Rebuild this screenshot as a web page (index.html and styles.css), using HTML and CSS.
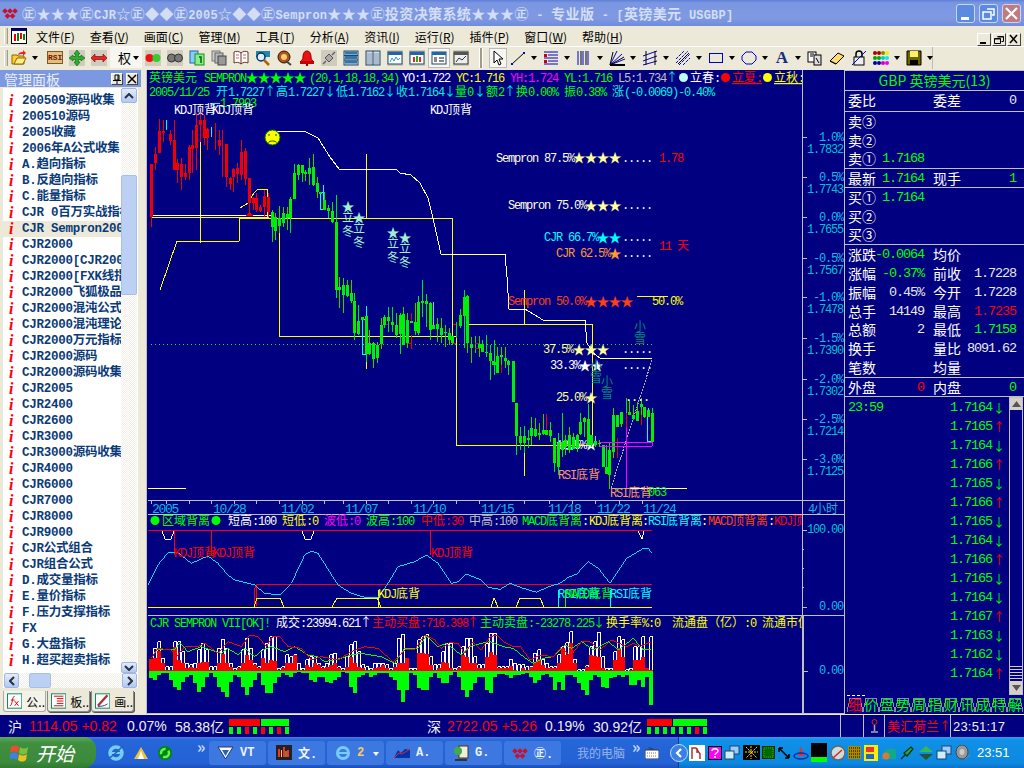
FILE: index.html
```html
<!DOCTYPE html>
<html lang="zh">
<head>
<meta charset="utf-8">
<title>英镑美元 USGBP</title>
<link rel="stylesheet" href="styles.css">
</head>
<body>
<div class="app">

<header class="titlebar">
  <svg class="logo" width="16" height="14" viewBox="0 0 16 14"><g class="logo-d"><rect x="1" y="3" width="4" height="4" transform="rotate(45 3 5)"/><rect x="6" y="3" width="4" height="4" transform="rotate(45 8 5)"/><rect x="11" y="3" width="4" height="4" transform="rotate(45 13 5)"/><rect x="3.500" y="8" width="4" height="4" transform="rotate(45 5.500 10)"/><rect x="8.500" y="8" width="4" height="4" transform="rotate(45 10.500 10)"/></g></svg>
  <div class="title-text">㊣★★★㊣<span class="lat">CJR</span>☆㊣◆◆㊣<span class="lat">2005</span>☆◆◆㊣<span class="lat">Sempron</span>★★★㊣投资决策系统★★★㊣<span class="lat"> - </span>专业版<span class="lat"> - [</span>英镑美元<span class="lat"> USGBP]</span></div>
  <div class="winbtns">
    <div class="wb"><svg width="19" height="19" viewBox="0 0 19 19"><rect x="5" y="13" width="8" height="3" fill="#fff"/></svg></div>
    <div class="wb"><svg width="19" height="19" viewBox="0 0 19 19"><path d="M8 5h7v6h-2M4 8h8v7H4z" fill="none" stroke="#fff" stroke-width="1.500"/></svg></div>
    <div class="wb wb-close"><svg width="19" height="19" viewBox="0 0 19 19"><path d="M4 4l11 11M15 4L4 15" stroke="#fff" stroke-width="2.200"/></svg></div>
  </div>
</header>

<nav class="menubar">
  <div class="grip"></div>
  <svg class="appicon" width="16" height="16" viewBox="0 0 16 16"><rect x=".5" y=".5" width="15" height="15" fill="#fff" stroke="#000"/><path d="M1 2h14" stroke="#00a" stroke-width="2"/><path d="M4 6v7M10 5v6" stroke="#e00" stroke-width="2"/><path d="M7 5v8M13 6v6" stroke="#080" stroke-width="2"/></svg>
  <div class="menus">
    <span>文件(<u>F</u>)</span><span>查看(<u>V</u>)</span><span>画面(<u>C</u>)</span><span>管理(<u>M</u>)</span><span>工具(<u>T</u>)</span><span>分析(<u>A</u>)</span><span>资讯(<u>I</u>)</span><span>运行(<u>R</u>)</span><span>插件(<u>P</u>)</span><span>窗口(<u>W</u>)</span><span>帮助(<u>H</u>)</span>
  </div>
  <div class="mdibtns">
    <div class="mb"><svg width="12" height="11" viewBox="0 0 12 11"><path d="M2 8h6v2H2z"/></svg></div>
    <div class="mb"><svg width="12" height="11" viewBox="0 0 12 11"><path d="M4.500 2.500h6v5h-2M1.500 4.500h6v5h-6zM1.500 5h6M4.500 3h6" fill="none" stroke="#000"/></svg></div>
    <div class="mb"><svg width="12" height="11" viewBox="0 0 12 11"><path d="M2 1l7 8M9 1L2 9" stroke="#000" stroke-width="1.500"/></svg></div>
  </div>
</nav>

<div class="toolbar">
  <div class="grip"></div>
  <div class="tools">
    <div class="tb"><svg width="16" height="16" viewBox="0 0 16 16"><path d="M1 5h5l1 1h6v8H1z" fill="#fc3" stroke="#860"/><path d="M3 14l3-6h9l-3 6z" fill="#fe8" stroke="#860"/><path d="M7 5c1-3 3-3 5-3V0l3 3-3 3V4c-2 0-3 0-5 1z" fill="#e22"/></svg></div>
    <div class="dd"></div>
    <div class="tb gapl"><span class="rsi">RSI</span></div>
    <div class="tb ic"><svg width="16" height="16" viewBox="0 0 16 16"><path d="M8 0l3 4H9.500v2.500H12V5l4 3-4 3V9.500H9.500V12H11l-3 4-3-4h1.500V9.500H4V11L0 8l4-3v1.500h2.500V4H5z" fill="#3a3" stroke="#060" stroke-width=".6"/></svg></div>
    <div class="tb ic"><svg width="16" height="16" viewBox="0 0 16 16"><path d="M0 8l4-4v2.500h8V4l4 4-4 4V9.500H4V12z" fill="#e22" stroke="#700" stroke-width=".6"/></svg></div>
    <div class="tb quan"><span>权</span><i class="caret"></i></div>
    <div class="tb ic"><svg width="16" height="16" viewBox="0 0 16 16"><circle cx="4.500" cy="8" r="4" fill="#e11"/><circle cx="11.500" cy="8" r="4" fill="#3c3"/></svg></div>
    <div class="tb ic"><svg width="16" height="16" viewBox="0 0 16 16"><circle cx="4.500" cy="8" r="4" fill="#777" stroke="#333"/><circle cx="11.500" cy="8" r="4" fill="#777" stroke="#333"/></svg></div>
    <div class="tb"><svg width="16" height="16" viewBox="0 0 16 16"><rect x="1" y="1" width="8" height="12" fill="#8cf" stroke="#26a"/><rect x="6" y="4" width="9" height="11" fill="#8e8" stroke="#282"/><path d="M10 7h2v6" fill="none" stroke="#060" stroke-width="1.500"/></svg></div>
    <div class="tb"><svg width="16" height="16" viewBox="0 0 16 16"><rect x="1" y="1" width="8" height="10" fill="#ccc" stroke="#777"/><rect x="4" y="3" width="8" height="10" fill="#bbb" stroke="#666"/><rect x="7" y="6" width="8" height="9" fill="#999" stroke="#444"/></svg></div>
    <div class="tb"><svg width="16" height="16" viewBox="0 0 16 16"><path d="M8 3C6 1 3 1 1 2v11c2-1 5-1 7 1 2-2 5-2 7-1V2c-2-1-5-1-7 1z" fill="#fff" stroke="#632"/><path d="M8 3v11" stroke="#632"/><path d="M3 5h3M3 8h3M10 5h3M10 8h3" stroke="#c66"/></svg></div>
    <div class="tb"><svg width="16" height="16" viewBox="0 0 16 16"><rect x="1" y="1" width="14" height="6" fill="#28a"/><circle cx="6" cy="7" r="4" fill="#def" stroke="#036" stroke-width="1.500"/><path d="M9 10l5 5" stroke="#a60" stroke-width="2.500"/></svg></div>
    <div class="tb"><svg width="16" height="16" viewBox="0 0 16 16"><circle cx="7" cy="7" r="6" fill="#a52" stroke="#310"/><circle cx="7" cy="7" r="3" fill="#fc6"/><path d="M9 11l5 4" stroke="#444" stroke-width="2"/></svg></div>
    <div class="tb"><svg width="16" height="16" viewBox="0 0 16 16"><path d="M8 1c-3 0-4 3-4 6 0 2-1 3-3 5h14c-2-2-3-3-3-5 0-3-1-6-4-6z" fill="#e11" stroke="#800"/><rect x="1" y="12" width="14" height="2" fill="#c00"/><circle cx="8" cy="15" r="1.200" fill="#800"/></svg></div>
    <div class="tb ic"><svg width="16" height="16" viewBox="0 0 16 16"><path d="M2 14l3-3M11 5l3-3" stroke="#666" stroke-width="1.500"/><path d="M4 8l4-4 4 4-4 4z" fill="#aaa" stroke="#555"/></svg></div>
    <div class="tb"><svg width="16" height="16" viewBox="0 0 16 16"><rect x="1" y="1" width="14" height="14" fill="#cde" stroke="#246"/><path d="M2 3h12M2 7.500h12M2 12h12" stroke="#37a" stroke-width="3"/><path d="M1 5.500h14M1 10h14" stroke="#246"/></svg></div>
    <div class="tb"><svg width="16" height="16" viewBox="0 0 16 16"><rect x="1" y="1" width="14" height="14" fill="#cde" stroke="#246"/><rect x="2" y="3" width="5" height="11" fill="#abc"/><rect x="9" y="3" width="5" height="11" fill="#abc"/><path d="M8 1v14" stroke="#246"/></svg></div>
    <div class="tb ic"><svg width="16" height="16" viewBox="0 0 16 16"><rect x="1" y="2" width="14" height="12" fill="#fff" stroke="#246"/><rect x="1" y="2" width="14" height="3" fill="#26a"/><path d="M3 12l2-4 2 3 2-4 2 3 2-2" fill="none" stroke="#39c"/></svg></div>
    <div class="tb ic"><svg width="16" height="16" viewBox="0 0 16 16"><rect x="1" y="2" width="14" height="12" fill="#fff" stroke="#246"/><rect x="1" y="2" width="14" height="3" fill="#26a"/><path d="M5 7v5M11 7v5" stroke="#e22" stroke-width="2"/><path d="M8 6v6" stroke="#2a2" stroke-width="2"/></svg></div>
    <div class="tb pressed"><svg width="16" height="16" viewBox="0 0 16 16"><rect x="1" y="2" width="14" height="12" fill="#fff" stroke="#246"/><rect x="1" y="2" width="14" height="3" fill="#26a"/><rect x="3" y="7" width="3" height="5" fill="#888"/><rect x="8" y="7" width="5" height="2" fill="#888"/><rect x="8" y="10" width="5" height="2" fill="#888"/></svg></div>
    <div class="tb ic"><svg width="16" height="16" viewBox="0 0 16 16"><rect x="1" y="2" width="14" height="12" fill="#eee" stroke="#333"/><rect x="1" y="2" width="14" height="3" fill="#555"/><path d="M3 12l3-4 3 2 4-4" fill="none" stroke="#333"/></svg></div>
    <div class="tsep"></div>
    <div class="tb cursor"><svg width="14" height="16" viewBox="0 0 14 16"><path d="M3 1v12l3-3 2 5 2-1-2-5h4z" fill="#fff" stroke="#000"/></svg></div>
    <div class="tb"><svg width="16" height="16" viewBox="0 0 16 16"><path d="M2 14L14 3" stroke="#000"/><path d="M13 2h2v2h-2zM1 13h2v2H1z" fill="#00c"/></svg></div><div class="dd"></div>
    <div class="tb"><svg width="16" height="16" viewBox="0 0 16 16"><path d="M1 2h14M5 5h10M1 8h14M5 11h10M1 14h14" stroke="#00c"/><path d="M1 4h3v3H1zM1 10h3v3H1z" fill="#c00"/></svg></div><div class="dd"></div>
    <div class="tb"><svg width="16" height="16" viewBox="0 0 16 16"><path d="M2 1v14M7 1v14M12 1v14" stroke="#00c" stroke-width="1"/><path d="M5 1v14M10 1v14" stroke="#000"/></svg></div><div class="dd"></div>
    <div class="tb"><svg width="16" height="16" viewBox="0 0 16 16"><path d="M1 15L8 1M1 15L13 4M1 15L16 9" stroke="#00c"/><path d="M1 15L4 2M1 15L15 7" stroke="#000"/><path d="M1 15h15" stroke="#000" stroke-width="2"/></svg></div><div class="dd"></div>
    <div class="tb"><svg width="16" height="16" viewBox="0 0 16 16"><path d="M1 6l14-5M1 11l14-5M1 15l14-4" stroke="#00c"/><path d="M4 1v14M13 1v14" stroke="#000"/></svg></div><div class="dd"></div>
    <div class="tb"><svg width="16" height="16" viewBox="0 0 16 16"><path d="M1 9l8-8M1 13l12-12M4 15L15 4M8 15l7-7" stroke="#00c" stroke-dasharray="3 1"/><path d="M3 14L14 3" stroke="#000"/></svg></div><div class="dd"></div>
    <div class="tb"><svg width="16" height="16" viewBox="0 0 16 16"><rect x="1.500" y="3.500" width="13" height="9" fill="none" stroke="#00c" stroke-width="1"/></svg></div><div class="dd"></div>
    <div class="tb"><svg width="16" height="16" viewBox="0 0 16 16"><path d="M5 2h6l4 4v4l-4 4H5l-4-4V6z" fill="none" stroke="#00c"/></svg></div><div class="dd"></div>
    <div class="tb serifA">A</div><div class="dd"></div>
    <div class="tb"><svg width="16" height="16" viewBox="0 0 16 16"><rect x="1" y="2" width="8" height="10" fill="#fff" stroke="#000"/><rect x="7" y="5" width="7" height="10" fill="#ddd" stroke="#000"/><path d="M3 4h4M3 6h3M9 8l3 5" stroke="#000"/></svg></div>
    <div class="tb"><svg width="16" height="16" viewBox="0 0 16 16"><path d="M1 11l8-8 6 3-8 8z" fill="#fd6" stroke="#000"/><path d="M1 11l6 3" stroke="#000"/></svg></div>
    <div class="tb"><svg width="16" height="16" viewBox="0 0 16 16"><rect x="3" y="7" width="10" height="8" fill="#eee" stroke="#000"/><path d="M5 7V4c0-4 6-4 6 0v3" fill="none" stroke="#000" stroke-width="1.500"/><path d="M1 15L15 1" stroke="#00c"/></svg></div>
    <div class="tb"><svg width="16" height="14" viewBox="0 0 16 14"><g stroke-width="0"><circle cx="2" cy="2" r="2" fill="#a00"/><circle cx="6" cy="2" r="2" fill="#a00"/><circle cx="10" cy="2" r="2" fill="#880"/><circle cx="14" cy="2" r="2" fill="#ee0"/><circle cx="2" cy="7" r="2" fill="#0a0"/><circle cx="6" cy="7" r="2" fill="#0a0"/><circle cx="10" cy="7" r="2" fill="#0cc"/><circle cx="14" cy="7" r="2" fill="#0ee"/><circle cx="2" cy="12" r="2" fill="#00a"/><circle cx="6" cy="12" r="2" fill="#00a"/><circle cx="10" cy="12" r="2" fill="#c0c"/><circle cx="14" cy="12" r="2" fill="#e0e"/></g></svg></div><div class="dd"></div>
    <div class="tb"><svg width="16" height="16" viewBox="0 0 16 16"><path d="M1 1h14v14H1z" fill="#660" stroke="#000"/><rect x="4" y="1" width="8" height="6" fill="#fe6"/><rect x="4" y="10" width="8" height="5" fill="#000"/></svg></div><div class="dd"></div>
  </div>
</div>

<main class="main">
  <aside class="side">
    <div class="side-head">
      <span>管理面板</span>
      <div class="side-btns">
        <div class="mb sb"><svg width="10" height="10" viewBox="0 0 10 10"><path d="M3 1h4v5H3zM1 6.500h8M5 7v3M6 1v5" fill="none" stroke="#000"/></svg></div>
        <div class="mb sb"><svg width="10" height="10" viewBox="0 0 10 10"><path d="M1 1l8 8M9 1L1 9" stroke="#000" stroke-width="1.500"/></svg></div>
      </div>
    </div>
    <div class="listbox">
      <div class="list-wrap">
        <ul class="list">
          <li><i>i</i>200509源码收集</li>
          <li><i>i</i>200510源码</li>
          <li><i>i</i>2005收藏</li>
          <li><i>i</i>2006年A公式收集</li>
          <li><i>i</i>A.趋向指标</li>
          <li><i>i</i>B.反趋向指标</li>
          <li><i>i</i>C.能量指标</li>
          <li><i>i</i>CJR 0百万实战指标</li>
          <li class="sel"><i>i</i>CJR Sempron2000</li>
          <li><i>i</i>CJR2000</li>
          <li><i>i</i>CJR2000[CJR2000</li>
          <li><i>i</i>CJR2000[FXK线指标</li>
          <li><i>i</i>CJR2000飞狐极品</li>
          <li><i>i</i>CJR2000混沌公式</li>
          <li><i>i</i>CJR2000混沌理论</li>
          <li><i>i</i>CJR2000万元指标</li>
          <li><i>i</i>CJR2000源码</li>
          <li><i>i</i>CJR2000源码收集</li>
          <li><i>i</i>CJR2005</li>
          <li><i>i</i>CJR2400</li>
          <li><i>i</i>CJR2600</li>
          <li><i>i</i>CJR3000</li>
          <li><i>i</i>CJR3000源码收集</li>
          <li><i>i</i>CJR4000</li>
          <li><i>i</i>CJR6000</li>
          <li><i>i</i>CJR7000</li>
          <li><i>i</i>CJR8000</li>
          <li><i>i</i>CJR9000</li>
          <li><i>i</i>CJR公式组合</li>
          <li><i>i</i>CJR组合公式</li>
          <li><i>i</i>D.成交量指标</li>
          <li><i>i</i>E.量价指标</li>
          <li><i>i</i>F.压力支撑指标</li>
          <li><i>i</i>FX</li>
          <li><i>i</i>G.大盘指标</li>
          <li><i>i</i>H.超买超卖指标</li>
        </ul>
        <div class="vscroll">
          <div class="sbtn"><svg width="10" height="6" viewBox="0 0 10 6"><path d="M1 5l4-4 4 4" fill="none" stroke="#234" stroke-width="2"/></svg></div>
          <div class="vtrack"><div class="vthumb"></div></div>
          <div class="sbtn sbtn-s"><svg width="10" height="6" viewBox="0 0 10 6"><path d="M1 1l4 4 4-4" fill="none" stroke="#234" stroke-width="2"/></svg></div>
        </div>
      </div>
      <div class="hscroll">
        <div class="sbtn hb"><svg width="6" height="10" viewBox="0 0 6 10"><path d="M5 1L1 5l4 4" fill="none" stroke="#234" stroke-width="2"/></svg></div>
        <div class="htrack"><div class="hthumb"></div></div>
        <div class="sbtn hb"><svg width="6" height="10" viewBox="0 0 6 10"><path d="M1 1l4 4-4 4" fill="none" stroke="#234" stroke-width="2"/></svg></div>
      </div>
    </div>
    <div class="sidetabs">
      <div class="stab active"><svg width="16" height="16" viewBox="0 0 16 16"><rect x=".5" y=".5" width="15" height="15" fill="#fff" stroke="#086"/><path d="M3 13c3 0 2-10 5-10M4 7h4M8 8l4 5M12 8l-4 5" fill="none" stroke="#d00"/></svg><span>公..</span></div>
      <div class="stab"><svg width="16" height="16" viewBox="0 0 16 16"><rect x=".5" y=".5" width="15" height="15" fill="#fff" stroke="#086"/><path d="M3 3h10M6 5.500h7M6 8h7M6 10.500h7M3 13h10" stroke="#d00"/></svg><span>板..</span></div>
      <div class="stab"><svg width="16" height="16" viewBox="0 0 16 16"><rect x=".5" y=".5" width="15" height="15" fill="#fff" stroke="#086"/><path d="M3 13L13 2" stroke="#a33" stroke-width="2.500"/><path d="M3 14c3-1 6 0 10-3" fill="none" stroke="#33a"/></svg><span>画..</span></div>
    </div>
  </aside>

  <div class="chart">
    <svg class="chart-svg" width="698" height="644" viewBox="146 70 698 644">
      <defs><clipPath id="plot"><rect x="148" y="70" width="654" height="644"/></clipPath></defs>
      <rect class="navy" x="146" y="70" width="698" height="644"/>
      <path class="ln-gy" d="M146.500 70V714M802.500 70V714M803.500 616V714M148 500.500H844M148 514.500H844M148 615.500H844M146 713.500H844"/>

      <g clip-path="url(#plot)">
        <!-- main chart overlays -->
        <path class="ln-dot" d="M151 344.500H653"/>
        <path class="ln-y" d="M160 290L177 241H239L240 218H452V336M200 140V243M366 154V218M279.500 218V336H456M456.500 336V445H592V324H468M366.500 360V369M524.500 290V324M524.500 443V476M151 217H268V215M240 208L248 203L254 193L258 189H267V217"/>
        <path class="ln-w" d="M151 215H271M268 131H304L318 138L330 157L339 169H396L400 173L411 175L420 183L428 198L433 218L441 254H505L507 277L509 309H525L543 320H585L587 343L593 353L600 358H652M148 488H186M618 488H687"/>
        <path class="ln-gy2" d="M611 488L652 360"/>
        <path class="ln-y" d="M637 296H668"/>

        <text class="t w" x="556" y="449"><tspan class="m">12.5%</tspan></text>
        <text class="s w" x="591" y="449">★</text>

        <!-- red candles -->
        <g transform="translate(148 70) scale(.33333)">
          <path class="wick-r" d="M10 282V472M22 232V300M34 148V250M46 150V215M67 180V225M80 150V300M88 268V340M100 265V360M112 282V330M125 225V330M133 180V310M145 130V300M158 120V215M170 135V225M178 175V240M202 160V240M214 180V255M224 180V320M235 222V350M248 320V360M258 295V365M270 280V340M281 210V330M292 235V345M304 325V430M316 380V420M325 370V425M337 405V425M349 360V440M361 370V440"/>
          <path class="body-r" d="M10 282V440M22 252V280M34 184V250M46 184V190M67 192V212M80 210V300M88 280V300M100 282V322M112 310V322M124 230V310M133 225V238M145 165V235M158 150V165M170 150V205M178 178V203M214 210V227M235 222V320M248 324V342M258 297V322M270 293V312M281 245V315M292 243V327M304 325V400M316 385V398M325 385V420M337 412V423M349 378V410M361 380V425"/>
          <path class="wick-c" d="M55 150V180M190 172V200M528 345V418M517 368V418M517 368H528M517 418H528"/>
          <path class="tri" d="M292 438L304 425L317 438Z"/>
          <!-- green candles, first run -->
          <path class="wick-g" d="M373 420V515M382 430V510M394 408V490M406 410V470M418 410V480M428 380V490M439 282V388M451 282V330M463 285V335M472 300V332M484 265V345M496 252V348M508 320V385M530 365V420M541 405V445M553 395V460M565 375V660M574 620V660M586 625V660M598 630V660M610 630V660M823 630V660"/>
          <path class="body-g" d="M373 425V472M382 440V483M394 445V468M406 430V460M418 432V445M428 388V445M439 310V386M451 285V314M463 285V310M472 307V312M484 295V312M496 292V345M508 340V367M518 367V372M530 390V420M541 415V423M553 423V455M565 455V660M574 650V660M586 645V660M598 645V660"/>
        </g>
        <g transform="translate(148 290) scale(.33333)">
          <path class="wick-g" d="M565 0V25M574 0V55M586 0V70M598 0V20M610 0V40M619 10V150M631 45V135M655 48V215M664 120V195M676 155V235M688 155V220M700 85V178M709 75V115M721 50V125M733 50V125M745 68V145M757 68V192M766 50V165M778 68V175M802 40V135M811 18V135M823 0V80M835 12V110M847 35V150M868 85V155M880 85V158M892 105V172M904 115V165M913 140V165M925 95V145M937 57V115M949 0V175M958 15V190M970 140V218M982 138V190M994 138V202M1003 150V185M1015 135V200M1027 165V270M1039 150V255M1048 170V245"/>
          <path class="wick-c" d="M643 90V193H655M643 90H655M655 48V80M856 35V105"/>
          <path class="wick-r" d="M790 70V100M790 135V178M780 160H790M712 105H721M915 103H925M915 160H925M982 162H994M980 175H994"/>
          <path class="wick-y" d="M655 215V236"/>
          <path class="body-g" d="M586 0V15M598 0V18M610 8V33M619 33V130M631 93V133M643 80V90M655 78V192M664 160V192M676 160V207M688 165V205M700 105V162M709 80V106M721 82V94M733 95V105M745 105V135M757 75V132M766 72V165M778 90V160M790 93V100M802 95V123M811 37V130M823 33V40M835 33V42M847 40V120M856 105V117M868 102V117M880 115V135M892 125V128M904 130V150M913 138V160M937 75V108M949 22V78M958 18V158M970 162V175M994 162V175M1003 162V187M1015 185V188M1027 188V213M1039 215V225M1048 197V250"/>
        </g>
        <g transform="translate(490 290) scale(.33333)">
          <path class="wick-g" d="M34 170V250M46 170V235M57 210V255M70 212V335M80 340V495M92 410V480M104 408V490M116 420V475M124 380V465M136 385V440M148 400V450M160 372V435M182 395V455M194 445V545M206 430V555M218 370V500M228 435V495M240 410V490M250 430V478M262 432V485M272 370V435M284 380V440M296 342V465M304 435V470M316 437V472M328 450V470M340 465V530M350 465V553M360 455V598M372 355V505M396 365V410M410 325V415M418 330V372M430 345V390M442 335V392M454 325V375M464 352V385M487 355V458"/>
          <path class="wick-r" d="M170 372V420M384 445V505M410 368V415M454 375V405M35 225V250"/>
          <path class="wick-c" d="M474 380V455H486M476 355V380M228 478H250M316 437V452"/>
          <path class="body-g" d="M12 213V225M22 215V222M34 195V200M46 205V212M57 212V225M70 213V335M80 340V437M92 438V458M104 438V458M116 445V450M124 415V437M136 417V437M148 430V434M160 420V432M170 420V435M182 420V437M194 445V520M206 460V530M218 455V480M228 450V470M240 435V480M250 440V478M262 435V475M272 395V432M284 383V397M296 386V465M304 435V465M316 453V465M328 458V462M340 465V530M350 530V553M360 480V555M372 375V487M384 375V412M396 367V402M418 367V375M430 375V387M442 362V392M454 343V352M464 352V380M476 360V382M487 370V455"/>
          <path class="ln-mg3" d="M330 469H487V457H330M410 415V595"/>
          <path class="ln-g3" d="M362 597H420"/>
        </g>

        <!-- header lines -->
        <text class="t g" x="149" y="82">英镑美元</text>
        <text class="t g" x="204" y="82"><tspan class="m">SEMPRON</tspan></text>
        <text class="s g" x="252" y="82">★</text><text class="s g" x="264" y="82">★</text><text class="s g" x="276" y="82">★</text><text class="s g" x="288" y="82">★</text><text class="s g" x="300" y="82">★</text>
        <text class="t g" x="309" y="82"><tspan class="m">(20,1,18,18,34)</tspan></text>
        <text class="t w" x="402" y="82"><tspan class="m">YO:1.722</tspan></text>
        <text class="t y" x="456" y="82"><tspan class="m">YC:1.716</tspan></text>
        <text class="t mg" x="510" y="82"><tspan class="m">YH:1.724</tspan></text>
        <text class="t g" x="564" y="82"><tspan class="m">YL:1.716</tspan></text>
        <text class="t gy" x="618" y="82"><tspan class="m">L5:1.734</tspan></text>
        <text class="t c2" x="666" y="82">↑</text>
        <circle class="lc" cx="683.500" cy="77.500" r="4.500"/>
        <text class="t w" x="690" y="82">立春<tspan class="m">:</tspan></text>
        <circle class="r" cx="725.500" cy="77.500" r="4.500"/>
        <text class="t r u" x="732" y="82">立夏<tspan class="m">:</tspan></text>
        <circle class="y" cx="767.500" cy="77.500" r="4.500"/>
        <text class="t y u" x="774" y="82">立秋<tspan class="m">:</tspan></text>

        <text class="t g" x="149" y="96"><tspan class="m">2005/11/25</tspan></text>
        <text class="t c2" x="216" y="96">开<tspan class="m">1.7227</tspan></text>
        <text class="t c2" x="264" y="96">↑</text>
        <text class="t c2" x="276" y="96">高<tspan class="m">1.7227</tspan></text>
        <text class="t c2" x="324" y="96">↓</text>
        <text class="t c2" x="336" y="96">低<tspan class="m">1.7162</tspan></text>
        <text class="t c2" x="384" y="96">↓</text>
        <text class="t c2" x="396" y="96">收<tspan class="m">1.7164</tspan></text>
        <text class="t c2" x="444" y="96">↓</text>
        <text class="t g" x="455" y="96">量<tspan class="m">0</tspan></text>
        <text class="t c2" x="474" y="96">↓</text>
        <text class="t g" x="486" y="96">额<tspan class="m">2</tspan></text>
        <text class="t c2" x="504" y="96">↑</text>
        <text class="t g" x="516" y="96">换<tspan class="m">0.00%</tspan></text>
        <text class="t g" x="564" y="96">振<tspan class="m">0.38%</tspan></text>
        <text class="t c2" x="612" y="96">涨<tspan class="m">(-0.0069)-0.40%</tspan></text>

        <!-- chart labels -->
        <path class="ln-c" d="M210 103H220"/>
        <text class="t g" x="220" y="107"><tspan class="m">1.7903</tspan></text>
        <text class="t w" x="174" y="114"><tspan class="m">KDJ</tspan>顶背</text>
        <text class="t w" x="212" y="114"><tspan class="m">KDJ</tspan>顶背</text>
        <text class="t w" x="430" y="114"><tspan class="m">KDJ</tspan>顶背</text>
        <g>
          <circle class="smile" cx="272.500" cy="137.500" r="7.500"/>
          <path class="smile-m" d="M269 134v2M276 134v2M268.500 142.500c1-2 7-2 8 0"/>
        </g>
        <text class="s mt" x="348" y="211">★</text><text class="t mt" x="342" y="222">立</text><text class="t mt" x="342" y="236">冬</text>
        <text class="s mt" x="359" y="222">★</text><text class="t mt" x="353" y="233">立</text><text class="t mt" x="353" y="247">冬</text>
        <text class="s mt" x="393" y="237">★</text><text class="t mt" x="387" y="248">立</text><text class="t mt" x="387" y="262">冬</text>
        <text class="s mt" x="405" y="242">★</text><text class="t mt" x="399" y="253">立</text><text class="t mt" x="399" y="267">冬</text>

        <text class="t pw" x="496" y="162"><tspan class="m">Sempron 87.5%</tspan></text>
        <text class="s py" x="579" y="162">★</text><text class="s py" x="591" y="162">★</text><text class="s py" x="603" y="162">★</text><text class="s py" x="615" y="162">★</text>
        <text class="t pw" x="622" y="162"><tspan class="m">.....</tspan></text>
        <text class="t r" x="659" y="162"><tspan class="m">1.78</tspan></text>
        <text class="t pw" x="508" y="209"><tspan class="m">Sempron 75.0%</tspan></text>
        <text class="s py" x="591" y="210">★</text><text class="s py" x="603" y="210">★</text><text class="s py" x="615" y="210">★</text>
        <text class="t pw" x="622" y="209"><tspan class="m">.....</tspan></text>
        <text class="t c" x="544" y="241"><tspan class="m">CJR 66.7%</tspan></text>
        <text class="s c" x="603" y="242">★</text><text class="s c" x="615" y="242">★</text>
        <text class="t pw" x="622" y="241"><tspan class="m">.....</tspan></text>
        <text class="t o" x="556" y="257"><tspan class="m">CJR 62.5%</tspan></text>
        <text class="s o" x="615" y="258">★</text>
        <text class="t pw" x="622" y="257"><tspan class="m">.....</tspan></text>
        <text class="t r" x="659" y="250"><tspan class="m">11 </tspan>天</text>

        <text class="t or" x="508" y="305"><tspan class="m">Sempron 50.0%</tspan></text>
        <text class="s or" x="591" y="306">★</text><text class="s or" x="603" y="306">★</text><text class="s or" x="615" y="306">★</text><text class="s or" x="627" y="306">★</text>
        <text class="t y" x="652" y="305"><tspan class="m">50.0%</tspan></text>
        <text class="t py" x="543" y="353"><tspan class="m">37.5%</tspan></text>
        <text class="s py" x="579" y="354">★</text><text class="s py" x="591" y="354">★</text><text class="s py" x="603" y="354">★</text>
        <text class="t pw" x="622" y="353"><tspan class="m">.....</tspan></text>
        <text class="t w" x="550" y="369"><tspan class="m">33.3%</tspan></text>
        <text class="s w" x="585" y="370">★</text><text class="s w" x="597" y="370">★</text>
        <text class="t pw" x="622" y="369"><tspan class="m">.....</tspan></text>
        <text class="t py" x="556" y="401"><tspan class="m">25.0%</tspan></text>
        <text class="s py" x="591" y="402">★</text>
        <text class="t pw" x="625" y="401"><tspan class="m">....</tspan></text>
        <text class="t te" x="634" y="331">小</text><text class="t te" x="634" y="343">雪</text>
        <text class="t te" x="601" y="386">小</text><text class="t te" x="601" y="398">雪</text>
        <text class="t te" x="590" y="370">小</text><text class="t te" x="590" y="382">雪</text>
        <text class="t or2" x="558" y="479"><tspan class="m">RSI</tspan>底背</text>
        <text class="t or2" x="610" y="497"><tspan class="m">RSI</tspan>底背</text>
        <text class="t g" x="648" y="496"><tspan class="m">063</tspan></text>

        <!-- second panel -->
        <circle class="g" cx="155" cy="520.500" r="4.500"/>
        <text class="t g" x="162" y="525">区域背离</text>
        <circle class="g" cx="216" cy="520.500" r="4.500"/>
        <text class="t w" x="228" y="525">短高<tspan class="m">:100</tspan></text>
        <text class="t y" x="282" y="525">短低<tspan class="m">:0</tspan></text>
        <text class="t mg" x="324" y="525">波低<tspan class="m">:0</tspan></text>
        <text class="t g" x="366" y="525">波高<tspan class="m">:100</tspan></text>
        <text class="t r" x="421" y="525">中低<tspan class="m">:30</tspan></text>
        <text class="t gy" x="469" y="525">中高<tspan class="m">:100</tspan></text>
        <text class="t g" x="522" y="525"><tspan class="m">MACD</tspan>底背离</text>
        <text class="t w" x="582" y="525"><tspan class="m">:</tspan></text>
        <text class="t y" x="589" y="525"><tspan class="m">KDJ</tspan>底背离</text>
        <text class="t w" x="642" y="525"><tspan class="m">:</tspan></text>
        <text class="t c" x="648" y="525"><tspan class="m">RSI</tspan>底背离</text>
        <text class="t w" x="701" y="525"><tspan class="m">:</tspan></text>
        <text class="t or" x="708" y="525"><tspan class="m">MACD</tspan>顶背离</text>
        <text class="t w" x="768" y="525"><tspan class="m">:</tspan></text>
        <text class="t r" x="774" y="525"><tspan class="m">KDJ</tspan>顶背离</text>

        <path class="ln-r" d="M148 530.500H652M256 584.500H652M174.500 530V555M211.500 530V556M430.500 530V555M254.500 606V590L256 585V606"/>
        <path class="ln-y" d="M148 607.500H652M254 607L257 598H280L284 607M332 607L337 598H377L381 607M378.500 590V607M491 607L494 598L498 607M516 607L520 598H540L544 607"/>
        <path class="ln-w" d="M162 531L165 539H171L174 531M302 531L305 539H311L314 531M638 531L642 539L644 531"/>
        <path class="ln-c2" d="M558.500 590V607M610.500 590V607"/>
        <path class="ln-g1" d="M565.500 590V607"/>
        <g transform="translate(148 500) scale(.33333)">
          <polyline class="curve-c" points="0,255 30,195 60,158 90,158 130,190 180,168 210,190 240,225 260,240 320,255 350,280 395,285 430,250 470,165 490,153 510,160 570,255 610,280 650,292 690,292 720,250 750,200 800,185 835,165 870,190 910,250 930,245 955,222 1000,240 1020,262 1056,268 1086,250 1126,265 1166,277 1201,260 1236,250 1261,232 1286,222 1321,185 1351,205 1386,250 1436,175 1486,145 1501,145 1511,160"/>
        </g>
        <text class="t r" x="174" y="557"><tspan class="m">KDJ</tspan>顶背</text>
        <text class="t r" x="213" y="557"><tspan class="m">KDJ</tspan>顶背</text>
        <text class="t r" x="431" y="557"><tspan class="m">KDJ</tspan>顶背</text>
        <text class="t y" x="378" y="598"><tspan class="m">KDJ</tspan>底背</text>
        <text class="t c" x="558" y="598"><tspan class="m">RSI</tspan>底背</text>
        <text class="t g" x="565" y="598"><tspan class="m">MACD</tspan>底背</text>
        <text class="t c" x="610" y="598"><tspan class="m">RSI</tspan>底背</text>

        <!-- third panel -->
        <text class="t g" x="150" y="627"><tspan class="m">CJR SEMPRON VII[OK]!</tspan></text>
        <text class="t w" x="276" y="627">成交<tspan class="m">:23994.621</tspan></text>
        <text class="t w" x="360" y="627">↑</text>
        <text class="t r" x="372" y="627">主动买盘<tspan class="m">:716.398</tspan></text>
        <text class="t r" x="467" y="627">↑</text>
        <text class="t g" x="480" y="627">主动卖盘<tspan class="m">:-23278.225</tspan></text>
        <text class="t g" x="593" y="627">↓</text>
        <text class="t y" x="606" y="627">换手率<tspan class="m">%:0</tspan></text>
        <text class="t y" x="672" y="627">流通盘（亿）<tspan class="m">:0</tspan></text>
        <text class="t y" x="762" y="627">流通市值</text>

        <g transform="translate(148 500) scale(.33333)">
          <path class="hist-g" d="M4 513V535h12V540h12V525h12V520h12V520h12V540h12V560h12V570h12V545h12V530h12V525h12V550h12V575h12V560h12V530h12V520h12V530h12V560h12V575h12V590h12V545h12V525h12V530h12V560h12V585h12V560h12V540h12V520h12V555h12V580h12V580h12V550h12V530h12V520h12V525h12V530h12V520h12V515h12V520h12V520h12V540h12V545h12V530h12V530h12V545h12V550h12V540h12V530h12V515h12V520h12V560h12V580h12V530h12V525h12V520h12V530h12V525h12V520h12V520h12V520h12V530h12V540h12V570h12V605h12V570h12V520h12V525h12V565h12V570h12V570h12V530h12V520h12V535h12V550h12V550h12V525h12V515h12V530h12V570h12V590h12V570h12V550h12V530h12V530h12V570h12V580h12V530h12V522h12V522h12V525h12V535h12V525h12V525h12V522h12V520h12V530h12V550h12V540h12V525h12V522h12V530h12V570h12V545h12V570h12V525h12V525h12V530h12V550h12V570h12V585h12V540h12V525h12V530h12V560h12V565h12V535h12V530h12V525h12V530h12V525h12V555h12V555h12V540h12V562h12V530h12V615h12V513Z"/>
          <path class="hist-w" d="M17 513V445h10V513M29 513V425h10V513M41 513V475h10V513M53 513V500h10V513M65 513V500h10V513M77 513V425h10V513M89 513V425h10V513M101 513V455h10V513M113 513V490h10V513M125 513V495h10V513M137 513V490h10V513M149 513V450h10V513M161 513V430h10V513M173 513V450h10V513M185 513V500h10V513M197 513V500h10V513M209 513V445h10V513M221 513V418h10V513M233 513V445h10V513M245 513V490h10V513M257 513V505h10V513M269 513V500h10V513M281 513V450h10V513M293 513V415h10V513M305 513V445h10V513M317 513V490h10V513M329 513V500h10V513M341 513V450h10V513M353 513V430h10V513M365 513V410h10V513M377 513V410h10V513M389 513V505h10V513M401 513V500h10V513M413 513V465h10V513M425 513V470h10V513M437 513V465h10V513M449 513V490h10V513M461 513V505h10V513M473 513V480h10V513M485 513V470h10V513M497 513V470h10V513M509 513V490h10V513M521 513V500h10V513M533 513V490h10V513M545 513V465h10V513M557 513V460h10V513M569 513V500h10V513M581 513V505h10V513M593 513V470h10V513M605 513V435h10V513M617 513V425h10V513M629 513V455h10V513M641 513V495h10V513M653 513V500h10V513M665 513V505h10V513M677 513V490h10V513M689 513V490h10V513M701 513V490h10V513M713 513V495h10V513M725 513V505h10V513M737 513V490h10V513M749 513V415h10V513M761 513V403h10V513M773 513V475h10V513M785 513V505h10V513M797 513V505h10V513M809 513V420h10V513M821 513V410h10V513M833 513V405h10V513M845 513V470h10V513M857 513V495h10V513M869 513V495h10V513M881 513V455h10V513M893 513V430h10V513M905 513V430h10V513M917 513V505h10V513M929 513V500h10V513M941 513V440h10V513M953 513V415h10V513M965 513V415h10V513M977 513V470h10V513M989 513V495h10V513M1001 513V495h10V513M1013 513V430h10V513M1025 513V400h10V513M1037 513V400h10V513M1049 513V500h10V513M1061 513V500h10V513M1073 513V500h10V513M1085 513V478h10V513M1097 513V490h10V513M1109 513V495h10V513M1121 513V495h10V513M1133 513V500h10V513M1145 513V500h10V513M1157 513V460h10V513M1169 513V450h10V513M1181 513V480h10V513M1193 513V490h10V513M1205 513V500h10V513M1217 513V500h10V513M1229 513V465h10V513M1241 513V440h10V513M1253 513V428h10V513M1265 513V395h10V513M1277 513V478h10V513M1289 513V510h10V513M1301 513V510h10V513M1313 513V497h10V513M1325 513V440h10V513M1337 513V425h10V513M1349 513V397h10V513M1361 513V470h10V513M1373 513V505h10V513M1385 513V505h10V513M1397 513V455h10V513M1409 513V410h10V513M1421 513V420h10V513M1433 513V510h10V513M1445 513V505h10V513M1457 513V440h10V513M1469 513V440h10V513M1481 513V410h10V513M1505 513V410h10V513"/>
          <path class="hist-r" d="M4 513V478h12V475h12V452h12V490h12V510h12V510h12V440h12V480h12V490h12V505h12V500h12V505h12V490h12V485h12V485h12V510h12V510h12V490h12V462h12V488h12V500h12V510h12V505h12V490h12V465h12V480h12V495h12V505h12V475h12V490h12V480h12V482h12V510h12V505h12V490h12V488h12V465h12V510h12V510h12V495h12V500h12V490h12V495h12V505h12V500h12V495h12V490h12V505h12V510h12V500h12V470h12V490h12V500h12V505h12V510h12V510h12V505h12V500h12V495h12V505h12V510h12V500h12V490h12V490h12V475h12V510h12V510h12V460h12V460h12V462h12V495h12V510h12V505h12V485h12V490h12V505h12V510h12V505h12V465h12V470h12V490h12V490h12V505h12V505h12V470h12V455h12V465h12V505h12V505h12V505h12V498h12V510h12V512h12V505h12V510h12V500h12V485h12V478h12V495h12V505h12V505h12V505h12V490h12V445h12V465h12V430h12V490h12V512h12V512h12V500h12V465h12V468h12V470h12V505h12V510h12V510h12V480h12V445h12V470h12V512h12V510h12V480h12V480h12V470h12V505h12V510h12V513Z"/>
          <polyline class="curve-g" points="10,475 25,450 80,450 95,428 120,455 160,440 220,460 240,445 270,465 290,445 320,470 345,450 370,440 410,455 440,440 480,465 510,470 530,485 580,475 610,465 640,460 700,470 740,490 770,445 810,445 835,408 870,440 895,430 940,465 965,440 1000,430 1026,425 1066,440 1096,445 1126,470 1156,490 1186,475 1216,470 1251,435 1271,445 1301,425 1336,450 1381,425 1411,450 1456,415 1486,450 1510,450"/>
          <polyline class="curve-r" points="10,475 30,445 70,450 85,470 110,440 150,440 170,430 210,460 240,425 280,440 305,405 330,410 355,440 375,408 395,410 420,440 460,445 490,480 520,470 570,480 610,455 650,440 690,445 735,485 770,450 800,450 830,405 860,420 880,445 905,428 930,430 950,460 975,425 1000,450 1026,410 1046,405 1066,425 1096,440 1116,438 1146,480 1176,465 1216,470 1241,440 1266,470 1301,425 1326,425 1356,450 1391,420 1436,440 1456,430 1476,440 1510,425"/>
        </g>
      </g>

      <!-- x axis -->
      <path class="ln-gy" d="M151.500 501v3M166.500 501v3M189.500 501v3M211.500 501v3M234.500 501v3M256.500 501v3M279.500 501v3M302.500 501v3M324.500 501v3M343.500 501v3M366.500 501v3M388.500 501v3M411.500 501v3M433.500 501v3M456.500 501v3M479.500 501v3M524.500 501v3M549.500 501v3M572.500 501v3M595.500 501v3M619.500 501v3M642.500 501v3"/>
      <g class="ax">
        <text x="152" y="513">2005</text><text x="213" y="513">10/28</text><text x="281" y="513">11/02</text><text x="345" y="513">11/07</text><text x="413" y="513">11/10</text><text x="481" y="513">11/15</text><text x="548" y="513">11/18</text><text x="597" y="513">11/22</text><text x="643" y="513">11/24</text>
      </g>
      <text class="t axb" x="808" y="513"><tspan class="m">4</tspan>小时</text>

      <!-- y axis -->
      <path class="ln-gy" d="M802 137.500h5M802 177.500h5M802 217.500h5M802 258.500h5M802 297.500h5M802 338.500h5M802 379.500h5M802 419.500h5M802 459.500h5M802 530.500h5M802 549.500h2M802 568.500h2M802 587.500h2M802 607.500h5M803 671.500h5"/>
      <g class="axr">
        <text class="ax-p" x="843" y="141">1.0%</text><text x="843" y="153">1.7832</text>
        <text class="ax-p" x="843" y="181">0.5%</text><text x="843" y="193">1.7743</text>
        <text class="ax-p" x="843" y="221">0.0%</text><text x="843" y="233">1.7655</text>
        <text class="ax-p" x="843" y="262">-0.5%</text><text x="843" y="274">1.7567</text>
        <text class="ax-p" x="843" y="301">-1.0%</text><text x="843" y="313">1.7478</text>
        <text class="ax-p" x="843" y="342">-1.5%</text><text x="843" y="354">1.7390</text>
        <text class="ax-p" x="843" y="383">-2.0%</text><text x="843" y="395">1.7302</text>
        <text class="ax-p" x="843" y="423">-2.5%</text><text x="843" y="435">1.7214</text>
        <text class="ax-p" x="843" y="463">-3.0%</text><text x="843" y="475">1.7125</text>
        <text x="843" y="533">100.00</text>
        <text class="ax-p" x="843" y="610">0.00</text>
        <text class="ax-p" x="843" y="674">0.00</text>
      </g>
    </svg>
  </div>

  <aside class="quote">
    <div class="q-head">GBP 英镑美元(13)</div>
    <div class="q-sec h21"><div class="r"><b>委比</b><em></em><i></i><b>委差</b><em class="wt">0</em></div></div>
    <div class="q-sec h57">
      <div class="r"><b>卖③</b></div>
      <div class="r"><b>卖②</b></div>
      <div class="r"><b>卖①</b><em class="gn">1.7168</em></div>
    </div>
    <div class="q-sec h19"><div class="r"><b>最新</b><em class="gn">1.7164</em><i></i><b>现手</b><em class="gn">1</em></div></div>
    <div class="q-sec h57">
      <div class="r"><b>买①</b><em class="gn">1.7164</em></div>
      <div class="r"><b>买②</b></div>
      <div class="r"><b>买③</b></div>
    </div>
    <div class="q-sec h133">
      <div class="r"><b>涨跌</b><em class="gn">-0.0064</em><i></i><b>均价</b><em></em></div>
      <div class="r"><b>涨幅</b><em class="gn">-0.37%</em><i></i><b>前收</b><em class="wt">1.7228</em></div>
      <div class="r"><b>振幅</b><em class="wt">0.45%</em><i></i><b>今开</b><em class="wt">1.7228</em></div>
      <div class="r"><b>总手</b><em class="wt">14149</em><i></i><b>最高</b><em class="rd">1.7235</em></div>
      <div class="r"><b>总额</b><em class="wt">2</em><i></i><b>最低</b><em class="gn">1.7158</em></div>
      <div class="r"><b>换手</b><em></em><i></i><b>量比</b><em class="wt">8091.62</em></div>
      <div class="r"><b>笔数</b><em></em><i></i><b>均量</b><em></em></div>
    </div>
    <div class="q-sec h19"><div class="r"><b>外盘</b><em class="rd">0</em><i></i><b>内盘</b><em class="gn">0</em></div></div>
    <div class="ticks">
      <div class="tick-list">
        <div class="tk"><span class="tm">23:59</span><em class="gn">1.7164</em><u class="ar-g">↓</u></div>
        <div class="tk"><span class="tm"></span><em class="gn">1.7165</em><u class="ar-r">↑</u></div>
        <div class="tk"><span class="tm"></span><em class="gn">1.7164</em><u class="ar-g">↓</u></div>
        <div class="tk"><span class="tm"></span><em class="gn">1.7166</em><u class="ar-r">↑</u></div>
        <div class="tk"><span class="tm"></span><em class="gn">1.7165</em><u class="ar-g">↓</u></div>
        <div class="tk"><span class="tm"></span><em class="gn">1.7166</em><u class="ar-r">↑</u></div>
        <div class="tk"><span class="tm"></span><em class="gn">1.7165</em><u class="ar-g">↓</u></div>
        <div class="tk"><span class="tm"></span><em class="gn">1.7164</em><u class="ar-g">↓</u></div>
        <div class="tk"><span class="tm"></span><em class="gn">1.7166</em><u class="ar-r">↑</u></div>
        <div class="tk"><span class="tm"></span><em class="gn">1.7165</em><u class="ar-g">↓</u></div>
        <div class="tk"><span class="tm"></span><em class="gn">1.7164</em><u class="ar-g">↓</u></div>
        <div class="tk"><span class="tm"></span><em class="gn">1.7167</em><u class="ar-r">↑</u></div>
        <div class="tk"><span class="tm"></span><em class="gn">1.7163</em><u class="ar-g">↓</u></div>
        <div class="tk"><span class="tm"></span><em class="gn">1.7162</em><u class="ar-g">↓</u></div>
        <div class="tk"><span class="tm"></span><em class="gn">1.7164</em><u class="ar-r">↑</u></div>
      </div>
      <div class="tscroll">
        <div class="tsb"><svg width="9" height="6" viewBox="0 0 9 6"><path d="M4.500 0L9 6H0z" fill="#555"/></svg></div>
        <div class="tstrack"></div>
        <div class="tsgrip"></div>
        <div class="tsb"><svg width="9" height="6" viewBox="0 0 9 6"><path d="M0 0h9L4.500 6z" fill="#555"/></svg></div>
      </div>
    </div>
    <svg class="qtabs" width="179" height="19" viewBox="0 0 179 19">
      <path class="qt-dash" d="M2 .5H20"/>
      <path class="qt-edge" d="M2 17L5 3H15L18 17L21 3H31L34 17L37 3H47L50 17L53 3H63L66 17L69 3H79L82 17L85 3H95L98 17L101 3H111L114 17L117 3H127L130 17L133 3H143L146 17L149 3H159L162 17L165 3H175L178 17"/>
      <text class="qt r" x="3" y="15">细</text><text class="qt g" x="19" y="15">价</text><text class="qt g" x="35" y="15">盘</text><text class="qt g" x="51" y="15">势</text><text class="qt g" x="67" y="15">周</text><text class="qt g" x="83" y="15">指</text><text class="qt g" x="99" y="15">财</text><text class="qt g" x="115" y="15">讯</text><text class="qt g" x="131" y="15">成</text><text class="qt g" x="147" y="15">特</text><text class="qt g" x="163" y="15">解</text>
    </svg>
  </aside>
</main>

<div class="indexbar">
  <span class="ib-w ib-1">沪</span>
  <span class="ib-r ib-2">1114.05 +0.82</span>
  <span class="ib-w ib-3">0.07%</span>
  <span class="ib-w ib-4">58.38亿</span>
  <div class="mini">
    <div class="mini-top"><div class="mt-r w31"></div><div class="mt-g w28"></div></div>
    <div class="mini-sq"><s class="sg"></s><s class="sg"></s><s class="sr"></s><s class="sg"></s><s class="sr"></s><s class="sg"></s><s class="sr"></s><s class="sg"></s></div>
  </div>
  <span class="ib-w ib-sp1">深</span>
  <span class="ib-r ib-2">2722.05 +5.26</span>
  <span class="ib-w ib-3">0.19%</span>
  <span class="ib-w ib-4">30.92亿</span>
  <div class="mini">
    <div class="mini-top"><div class="mt-r w25"></div><div class="mt-g w34"></div></div>
    <div class="mini-sq"><s class="sg"></s><s class="sg"></s><s class="sg"></s><s class="sg"></s><s class="sg"></s><s class="sg"></s><s class="sr"></s><s class="sg"></s></div>
  </div>
  <div class="ib-cell c1"></div>
  <div class="ib-cell c2"><svg width="11" height="15" viewBox="0 0 11 15"><circle cx="5.500" cy="3" r="2.500" fill="none" stroke="#d22"/><path d="M5.500 6v6M2 13h7" stroke="#aaa" stroke-width="1.500"/></svg></div>
  <div class="ib-cell c3">美汇荷兰<span class="ib-ar">↑</span></div>
  <div class="ib-cell c4">23:51:17</div>
</div>

<footer class="taskbar">
  <div class="start">
    <svg width="19" height="18" viewBox="0 0 19 18"><path d="M1 3c3-2 5-2 8 0l-1 6c-3-2-5-2-8 0z" fill="#e8502c"/><path d="M10 3c3 2 5 2 8 0l-1 6c-3 2-5 2-8 0z" fill="#7cc040"/><path d="M0 10c3-2 5-2 8 0l-1 6c-3-2-5-2-8 0z" fill="#3c80e8"/><path d="M9 10c3 2 5 2 8 0l-1 6c-3 2-5 2-8 0z" fill="#f0c020"/></svg>
    <span>开始</span>
  </div>
  <div class="quick">
    <svg width="18" height="18" viewBox="0 0 18 18"><circle cx="9" cy="9" r="6" fill="none" stroke="#7cf" stroke-width="3.500"/><path d="M4 9h10" stroke="#7cf" stroke-width="2"/><path d="M2 14c3-1 10-8 14-12" fill="none" stroke="#26a" stroke-width="1.500"/></svg>
    <svg width="16" height="14" viewBox="0 0 16 14"><path d="M8 1l7 12H1z" fill="#f0c040"/><path d="M8 5l3 8H5z" fill="#fff"/></svg>
    <svg width="16" height="16" viewBox="0 0 16 16"><circle cx="8" cy="8" r="7" fill="#080"/><circle cx="8" cy="8" r="4" fill="none" stroke="#6e6" stroke-width="2.500" stroke-dasharray="8 3"/></svg>
    <span class="chev">»</span>
  </div>
  <div class="task-btn"><svg width="17" height="14" viewBox="0 0 17 14"><path d="M1 1h15L8.500 13z" fill="#fff" stroke="#238"/><path d="M5 4h7L8.500 10z" fill="#26a"/></svg><span>VT</span></div>
  <div class="task-btn"><svg width="16" height="15" viewBox="0 0 16 15"><rect width="16" height="15" fill="#222"/><path d="M3 4v8M8 2v10M12 5v7" stroke="#e33" stroke-width="2"/><path d="M5.500 5v7M10 6v6" stroke="#fc3" stroke-width="1"/></svg><span>文.</span></div>
  <div class="task-btn"><svg width="16" height="16" viewBox="0 0 16 16"><circle cx="8" cy="8" r="5.500" fill="none" stroke="#7cf" stroke-width="3"/><path d="M3 8h10" stroke="#7cf" stroke-width="2"/></svg><span class="tb-yl">2</span><i class="task-caret"></i></div>
  <div class="task-btn"><svg width="16" height="10" viewBox="0 0 16 10"><path d="M0 10l4-8 3 3 4-4 5 1v8z" fill="#03a"/><path d="M0 10l5-5 3 1 8-5" fill="none" stroke="#e22"/></svg><span>A.</span></div>
  <div class="task-btn"><svg width="16" height="16" viewBox="0 0 16 16"><rect x="6" y="1" width="9" height="12" fill="#eed" stroke="#432"/><circle cx="5" cy="6" r="4" fill="#4a4"/><path d="M2 15h12" stroke="#333" stroke-width="2"/></svg><span>G.</span></div>
  <div class="task-btn"><svg width="16" height="14" viewBox="0 0 16 14"><g class="logo-d2"><rect x="1" y="3" width="4" height="4" transform="rotate(45 3 5)"/><rect x="6" y="3" width="4" height="4" transform="rotate(45 8 5)"/><rect x="11" y="3" width="4" height="4" transform="rotate(45 13 5)"/><rect x="3.500" y="8" width="4" height="4" transform="rotate(45 5.500 10)"/><rect x="8.500" y="8" width="4" height="4" transform="rotate(45 10.500 10)"/></g></svg><span>㊣.</span></div>
  <div class="task-mid"><span class="mycomp">我的电脑</span><span class="chev">»</span>
    <svg width="14" height="12" viewBox="0 0 14 12"><rect x="0" y="3" width="14" height="9" rx="1" fill="#fff" stroke="#333"/><path d="M2 6h10M2 9h10" stroke="#777" stroke-dasharray="1 1"/><path d="M8 3c0-3-4 0-4-3" fill="none" stroke="#333"/></svg>
  </div>
  <div class="tray">
    <div class="tray-chev"><svg width="18" height="18" viewBox="0 0 18 18"><circle cx="9" cy="9" r="8.500" fill="#3a80e8" stroke="#bde"/><path d="M11 5L7 9l4 4" fill="none" stroke="#fff" stroke-width="2.200"/></svg></div>
    <div class="tray-icons">
      <svg width="16" height="16" viewBox="0 0 16 16"><rect width="16" height="16" fill="#fff"/><path d="M3 14V3h4l4 6v5M8 3v5" fill="none" stroke="#a33" stroke-width="1.500"/></svg>
      <svg width="14" height="14" viewBox="0 0 14 14"><rect x=".5" y=".5" width="13" height="13" fill="#f0f" stroke="#000"/><path d="M4 5c0-3 6-3 6 0 0 2-3 2-3 4M7 10v2" fill="none" stroke="#fff" stroke-width="1.500"/></svg>
      <svg width="16" height="16" viewBox="0 0 16 16"><rect x="6" y="1" width="9" height="8" fill="#9cf" stroke="#246"/><rect x="1" y="6" width="9" height="8" fill="#cef" stroke="#246"/></svg>
      <svg width="17" height="15" viewBox="0 0 17 15"><rect width="17" height="15" fill="#000"/><path d="M8 1v13M2 7h13M3 2l11 11M14 2L3 13" stroke="#fd0" stroke-dasharray="2 1"/></svg>
      <svg width="13" height="13" viewBox="0 0 13 13"><rect width="13" height="13" fill="#060" stroke="#000"/><path d="M2 2h9v9H2z" fill="none" stroke="#0c0" stroke-dasharray="1 1"/></svg>
      <svg width="12" height="12" viewBox="0 0 12 12"><path d="M1 1l10 10M1 1h4M1 1v4M11 11H7M11 11V7" stroke="#000" stroke-width="1.500" fill="none"/></svg>
      <svg width="16" height="15" viewBox="0 0 16 15"><path d="M8 1l3 10H5z" fill="#d33"/><ellipse cx="8" cy="11" rx="7" ry="3" fill="none" stroke="#03a" stroke-width="1.500"/></svg>
      <div class="tray-black"></div>
      <svg width="16" height="16" viewBox="0 0 16 16"><circle cx="8" cy="8" r="7" fill="#cdd" stroke="#666" stroke-width="1.500"/><path d="M3 13L12 5" stroke="#d22" stroke-width="1.500"/></svg>
      <svg width="13" height="13" viewBox="0 0 13 13"><rect width="13" height="13" fill="#a80"/><path d="M1 2h11M1 5h11M1 8h11M1 11h11" stroke="#000" stroke-dasharray="1 1"/></svg>
      <svg width="14" height="16" viewBox="0 0 14 16"><rect width="14" height="16" fill="#fe0"/><rect x="2" y="2" width="8" height="5" fill="#e33"/><rect x="2" y="9" width="8" height="5" fill="#26c"/></svg>
      <svg width="16" height="14" viewBox="0 0 16 14"><path d="M1 13C1 4 8 0 15 4v9z" fill="#1a8"/><circle cx="5" cy="10" r="3.500" fill="#d73"/></svg>
      <svg width="16" height="16" viewBox="0 0 16 16"><path d="M2 14l4-4M5 8l3 3 6-7-2-2z" fill="#2a4" stroke="#030" stroke-width="1.200"/></svg>
      <svg width="16" height="16" viewBox="0 0 16 16"><path d="M8 1l7 6H1z" fill="#3b5"/><path d="M8 15l7-6H1z" fill="#253"/></svg>
      <svg width="16" height="16" viewBox="0 0 16 16"><rect x="6" y="1" width="9" height="8" fill="#9cf" stroke="#246"/><rect x="1" y="6" width="9" height="8" fill="#cef" stroke="#246"/></svg>
      <svg width="16" height="16" viewBox="0 0 16 16"><ellipse cx="7" cy="7" rx="6" ry="7" fill="#999" stroke="#444"/><ellipse cx="7" cy="7" rx="2.500" ry="3" fill="#ccc"/><path d="M10 14l5-4" stroke="#68c"/></svg>
    </div>
    <span class="clock">23:51</span>
  </div>
</footer>

</div>
</body>
</html>
```

FILE: styles.css
```css
* { box-sizing: border-box; }
html, body { margin: 0; padding: 0; }
body { font-family: "Noto Sans CJK SC", "Liberation Sans", sans-serif; background: #ece9d8; }
.app { width: 1024px; height: 768px; overflow: hidden; display: flex; flex-direction: column; }

/* title bar */
.titlebar { height: 26px; flex: none; display: flex; align-items: center; padding-left: 2px;
  background: linear-gradient(#5d80d8 0, #7c97e2 3px, #7f99e2 70%, #6f8cdc 100%); }
.logo { margin-right: 4px; }
.logo-d rect, .logo-d2 rect { fill: #c8102e; }
.title-text { font-size: 14px; font-weight: 700; color: #d3ddf5; white-space: pre; letter-spacing: .4px; flex: 1; }
.lat { font-family: "Liberation Mono", monospace; font-size: 12px; letter-spacing: .2px; }
.winbtns { display: flex; gap: 4px; margin-right: 3px; }
.wb { width: 19px; height: 19px; border-radius: 3px; background: #5b8ae2; border: 1px solid #c6d6f4; overflow: hidden; }
.wb svg { display: block; margin: -1px; }
.wb-close { background: #c07a80; }

/* menu bar */
.menubar { height: 20px; flex: none; display: flex; align-items: center; background: #ece9d8; padding-left: 4px; position: relative; }
.grip { width: 4px; height: 16px; border-left: 1px solid #fff; border-right: 1px solid #a09c88; background: #d8d4c0; flex: none; }
.appicon { margin-left: 3px; flex: none; }
.menus { display: flex; gap: 15px; margin-left: 9px; font-size: 12px; color: #000; white-space: nowrap; }
.mdibtns { margin-left: auto; display: flex; gap: 1px; margin-right: 3px; align-self: flex-end; }
.mb { width: 14px; height: 13px; background: #ece9d8; border: 1px solid; border-color: #fff #444 #444 #fff; display: flex; align-items: center; justify-content: center; }

/* toolbar */
.toolbar { height: 22px; flex: none; display: flex; align-items: center; padding-left: 4px; background: #ece9d8; border-top: 1px solid #fff; }
.tools { display: flex; align-items: center; height: 22px; width: 925px; border-right: 1px solid #bbb; }
.tb { width: 22px; height: 20px; display: flex; align-items: center; justify-content: center; flex: none; }
.dd { width: 11px; height: 20px; flex: none; position: relative; }
.dd::after { content: ""; position: absolute; left: 2px; top: 8px; border: 3px solid transparent; border-top: 4px solid #000; border-bottom: 0; }
.gapl { margin-left: 3px; }
.ic svg { background: #cfccbe; }
.rsi { width: 16px; height: 13px; background: #e0c080; border: 1px solid #7a5a20; color: #801000; font: 700 8px/11px "Liberation Mono", monospace; text-align: center; display: block; }
.quan { width: 32px; background: #f7f6f0; justify-content: flex-start; padding-left: 8px; font-size: 13px; color: #000; position: relative; height: 21px; }
.caret { position: absolute; right: 3px; top: 9px; border: 3px solid transparent; border-top: 4px solid #000; border-bottom: 0; }
.pressed { background: #f7f6f0; border: 1px solid #bbb; }
.tsep { width: 14px; height: 20px; flex: none; margin-left: 3px; background: linear-gradient(90deg, transparent 4px, #fff 4px, #fff 5px, #a09c88 5px, #a09c88 7px, #fff 7px, #fff 8px, transparent 8px); }
.cursor { width: 18px; background: #f7f6f0; border: 1px solid #bbb; }
.serifA { font: 700 17px "Liberation Serif", serif; color: #1a2a80; }

/* main */
.main { height: 646px; flex: none; display: flex; padding-top: 2px; }
.side { width: 146px; flex: none; background: #ece9d8; display: flex; flex-direction: column; }
.side-head { height: 17px; margin-bottom: 1px; width: 141px; background: #7b98e0; color: #e8eefc; font-size: 14px; display: flex; align-items: center; justify-content: space-between; padding: 0 3px 0 4px; line-height: 16px; flex: none; }
.side-btns { display: flex; gap: 3px; }
.sb { width: 12px; height: 12px; }
.listbox { width: 135px; margin-left: 3px; flex: none; display: flex; flex-direction: column; background: #fff; height: 600px; }
.list-wrap { display: flex; height: 585px; overflow: hidden; }
.list { list-style: none; margin: 0; padding: 5px 0 0; width: 118px; flex: none; overflow: hidden; font-family: "Liberation Mono", "Noto Sans CJK SC", monospace; font-weight: 700; font-size: 12.500px; letter-spacing: -.250px; color: #0a3a78; }
.list li { height: 16px; line-height: 16px; white-space: pre; overflow: hidden; display: flex; }
.list i { width: 19px; flex: none; color: #f00; font: italic 700 16px/16px "Liberation Serif", serif; padding-left: 6px; letter-spacing: 0; }
.sel { background: #ece9d8; }
.vscroll { width: 16px; flex: none; display: flex; flex-direction: column; }
.sbtn { flex: none; height: 15px; width: 16px; background: linear-gradient(#e4ecfb, #b4c8f0); border: 1px solid #9fb6e6; border-radius: 2px; display: flex; align-items: center; justify-content: center; }
.sbtn-s { height: 11px; }
.vtrack { flex: 1; background: repeating-conic-gradient(#f2f0e6 0 25%, #fff 0 50%) 0 0 / 2px 2px; }
.vthumb { margin-top: 72px; height: 120px; background: #bcd0f4; border: 1px solid #a8bfe8; border-radius: 2px; }
.hscroll { height: 15px; display: flex; align-items: center; padding: 0 1px; flex: none; }
.hb { width: 15px; height: 15px; }
.htrack { flex: 1; height: 15px; background: repeating-conic-gradient(#f2f0e6 0 25%, #fff 0 50%) 0 0 / 2px 2px; }
.hthumb { width: 22px; height: 15px; margin-left: 10px; background: #bcd0f4; border: 1px solid #a8bfe8; border-radius: 2px; }
.sidetabs { display: flex; gap: 1px; margin: 3px 0 0 3px; height: 22px; }
.stab { width: 43px; height: 21px; background: #ece9d8; border: 1px solid #888; border-top: 0; border-radius: 0 0 3px 3px; display: flex; align-items: center; padding-left: 3px; gap: 4px; font-size: 12px; color: #000; box-shadow: 1px 1px 0 #555; }
.active { background: #f4f3ea; border-color: #aaa; box-shadow: none; }

/* chart */
.chart { width: 698px; flex: none; height: 644px; }
.chart-svg { display: block; }
.navy { fill: #000080; }
.t { font-family: "Noto Sans CJK SC", sans-serif; font-size: 12px; white-space: pre; }
.m { font-family: "Liberation Mono", monospace; font-size: 12px; letter-spacing: -1.200px; white-space: pre; }
.s { font-family: "Noto Sans CJK SC", sans-serif; font-size: 13px; text-anchor: middle; }
.u { text-decoration: underline; }
.g { fill: #00ff00; } .w { fill: #fff; } .y { fill: #ffff00; } .r { fill: #ff0000; } .c { fill: #00ffff; } .mg { fill: #ff00ff; }
.gy { fill: #c0c0c0; } .c2 { fill: #00f0e0; } .lc { fill: #c0ffff; } .o { fill: #ff9933; } .or { fill: #ff4010; } .or2 { fill: #ff9966; }
.pw { fill: #ffffe0; } .py { fill: #ffff99; } .mt { fill: #a0f0d0; } .te { fill: #008878; }
.ln-gy { fill: none; stroke: #c0c0c0; stroke-width: 1; shape-rendering: crispEdges; }
.ln-dot { fill: none; stroke: #00ff00; stroke-width: 1; stroke-dasharray: 1 3; shape-rendering: crispEdges; }
.ln-y { fill: none; stroke: #ffff00; stroke-width: 1; shape-rendering: crispEdges; }
.ln-w { fill: none; stroke: #fff; stroke-width: 1; shape-rendering: crispEdges; }
.ln-r { fill: none; stroke: #ff0000; stroke-width: 1; shape-rendering: crispEdges; }
.ln-c { fill: none; stroke: #00ffff; stroke-width: 1; shape-rendering: crispEdges; }
.ln-c2 { fill: none; stroke: #00ffff; stroke-width: 1; shape-rendering: crispEdges; }
.ln-g1 { fill: none; stroke: #00ff00; stroke-width: 1; shape-rendering: crispEdges; }
.ln-gy2 { fill: none; stroke: #b0b0b0; stroke-width: 1; stroke-dasharray: 2 1; shape-rendering: crispEdges; }
.ln-mg3 { fill: none; stroke: #ff00ff; stroke-width: 3; shape-rendering: crispEdges; }
.ln-g3 { fill: none; stroke: #00ff00; stroke-width: 3; shape-rendering: crispEdges; }
.wick-r { fill: none; stroke: #f00000; stroke-width: 3; shape-rendering: crispEdges; }
.body-r { fill: none; stroke: #f00000; stroke-width: 9; shape-rendering: crispEdges; }
.wick-g { fill: none; stroke: #00e800; stroke-width: 3; shape-rendering: crispEdges; }
.body-g { fill: none; stroke: #00f000; stroke-width: 9; shape-rendering: crispEdges; }
.wick-c { fill: none; stroke: #00ffff; stroke-width: 3; shape-rendering: crispEdges; }
.wick-y { fill: none; stroke: #ffff00; stroke-width: 3; shape-rendering: crispEdges; }
.tri { fill: #f00000; shape-rendering: crispEdges; }
.smile { fill: #ffff00; stroke: #008000; stroke-width: 1; }
.smile-m { fill: none; stroke: #005000; stroke-width: 1; }
.curve-c { fill: none; stroke: #00e0f0; stroke-width: 3; shape-rendering: crispEdges; }
.curve-g { fill: none; stroke: #00ff00; stroke-width: 3; shape-rendering: crispEdges; }
.curve-r { fill: none; stroke: #ff0000; stroke-width: 3; shape-rendering: crispEdges; }
.hist-g { fill: #00ff00; shape-rendering: crispEdges; }
.hist-r { fill: #ff0000; shape-rendering: crispEdges; }
.hist-w { fill: none; stroke: #fff; stroke-width: 3; shape-rendering: crispEdges; }
.ax text { font-family: "Liberation Mono", monospace; font-size: 13px; letter-spacing: -1.300px; fill: #10b8e0; }
.axb { fill: #10b8e0; }
.axr text { font-family: "Liberation Mono", monospace; font-size: 12px; letter-spacing: -1.200px; fill: #00c0d0; text-anchor: end; }
.axr .ax-p { fill: #18b8e8; }

/* quote panel */
.quote { width: 180px; flex: none; height: 644px; background: #000080; border-left: 1px solid #c0c0c0; border-top: 1px solid #c0c0c0; color: #fff; font-size: 14px; display: flex; flex-direction: column; overflow: hidden; }
.q-head { height: 20px; flex: none; text-align: center; color: #00ff00; font-size: 14px; line-height: 18px; border-bottom: 1px solid #c0c0c0; }
.q-sec { flex: none; border-bottom: 1px solid #c0c0c0; padding-left: 3px; overflow: hidden; }
.h21 { height: 21px; } .h57 { height: 57px; } .h19 { height: 19px; } .h133 { height: 133px; }
.h57 .r { height: 18.670px; }
.h133 .r { height: 18.860px; }
.h19 .r { height: 18px; }
.r { display: grid; grid-template-columns: 28px 48px 9px 28px 55px; height: 19px; line-height: 19px; }
.r b { font-weight: 400; white-space: nowrap; }
.r i { display: block; }
.r em, .tk em { font-style: normal; font-family: "Liberation Mono", monospace; font-size: 13.500px; letter-spacing: -1.100px; justify-self: end; white-space: nowrap; }
.gn { color: #00ff00; } .wt { color: #e8e8e8; } .rd { color: #ff0000; }
.ticks { flex: 1; display: flex; min-height: 0; }
.tick-list { flex: 1; padding: 1px 0 0 3px; }
.tk { height: 19px; line-height: 19px; display: flex; align-items: center; }
.tm { width: 102px; color: #00ff00; font: 13.500px "Liberation Mono", monospace; letter-spacing: -1.100px; flex: none; }
.tk u { text-decoration: none; width: 12px; margin-left: 1px; text-align: center; font-size: 12px; }
.ar-g { color: #00ff00; } .ar-r { color: #ff0000; }
.tscroll { width: 14px; flex: none; margin-right: 1px; display: flex; flex-direction: column; border: 1px solid #c0c0c0; }
.tsb { height: 12px; background: #d4d0c8; display: flex; align-items: center; justify-content: center; flex: none; }
.tstrack { flex: 1; }
.tsgrip { height: 16px; flex: none; background: repeating-linear-gradient(#d4d0c8 0 1px, #000080 1px 3px); }
.qtabs { display: block; flex: none; margin-top: auto; }
.qt { font-family: "Noto Sans CJK SC", sans-serif; font-size: 14px; }
.qt-dash { stroke: #fff; fill: none; stroke-dasharray: 3 2; }
.qt-edge { fill: none; stroke: #8c8ca8; stroke-width: 1; shape-rendering: crispEdges; }

/* index bar */
.indexbar { height: 23px; flex: none; background: #000080; display: flex; align-items: center; font: 14px "Liberation Sans", "Noto Sans CJK SC", sans-serif; white-space: nowrap; border-top: 1px solid #ece9d8; }
.ib-w { color: #f0f0f0; } .ib-r { color: #ff0000; }
.ib-1 { width: 29px; padding-left: 8px; }
.ib-2 { width: 98px; }
.ib-3 { width: 48px; }
.ib-4 { width: 54px; }
.ib-sp1 { width: 20px; margin-left: 138px; }
.mini { width: 60px; flex: none; display: flex; flex-direction: column; gap: 1px; }
.mini-top { display: flex; gap: 1px; height: 7px; }
.mt-r { background: #ff0000; height: 7px; } .mt-g { background: #00ff00; height: 7px; }
.w31 { width: 31px; } .w28 { width: 28px; } .w25 { width: 25px; } .w34 { width: 34px; }
.mini-sq { display: flex; justify-content: space-between; height: 7px; }
.mini-sq s { width: 4px; height: 7px; display: block; }
.sg { background: #00ff00; } .sr { background: #ff0000; }
.ib-cell { height: 22px; border-left: 1px solid #c0c0c0; flex: none; display: flex; align-items: center; }
.c1 { width: 23px; margin-left: 133px; }
.c2 { width: 21px; justify-content: center; }
.c3 { width: 66px; color: #ff0000; padding-left: 2px; font: 13px/22px "Noto Sans CJK SC", sans-serif; overflow: visible; }
.ib-ar { margin-left: 0; font-size: 12px; color: #ff0000; }
.c4 { padding-left: 2px; color: #f0f0f0; font: 13px "Liberation Sans", sans-serif; letter-spacing: .200px; }

/* task bar */
.taskbar { height: 31px; flex: none; display: flex; align-items: center; background: linear-gradient(#3a80e4 0, #2566d8 3px, #2361d4 85%, #1a4fb8 100%); color: #fff; }
.start { width: 96px; height: 31px; flex: none; border-radius: 0 12px 12px 0; background: linear-gradient(#5ca85c 0, #3f8f3f 20%, #3c8a3c 80%, #2f7a2f 100%); display: flex; align-items: center; padding-left: 10px; gap: 7px; font-style: italic; font-size: 19px; line-height: 1; color: #fff; }
.quick { width: 113px; flex: none; display: flex; align-items: center; padding-left: 11px; gap: 8px; position: relative; }
.chev { color: #c8dcff; font-size: 16px; font-weight: 700; line-height: 1; align-self: flex-start; margin-top: -6px; margin-left: 16px; }
.task-btn { width: 57px; height: 24px; margin-right: 2px; flex: none; background: #3c78e0; border-radius: 3px; display: flex; align-items: center; padding-left: 8px; gap: 6px; font: 700 12px "Liberation Mono", "Noto Sans CJK SC", monospace; color: #f0f4ff; position: relative; }
.tb-yl { color: #ffc860; }
.task-caret { position: absolute; right: 5px; top: 11px; border: 3px solid transparent; border-top: 4px solid #fff; border-bottom: 0; }
.task-mid { width: 115px; flex: none; display: flex; align-items: center; padding-left: 14px; gap: 0; }
.mycomp { font-size: 12px; color: #98b4e8; width: 46px; flex: none; white-space: nowrap; }
.task-mid .chev { margin-left: 9px; margin-right: 5px; }
.tray { flex: 1; height: 31px; display: flex; align-items: center; background: linear-gradient(#28a0f0 0, #1090e8 10%, #0c88e0 85%, #0a70c8 100%); margin-left: 0; border-left: 1px solid #103a90; position: relative; }
.tray-chev { width: 10px; margin-left: -9px; flex: none; }
.tray-chev svg { display: block; }
.tray-icons { display: flex; align-items: center; justify-content: space-between; width: 282px; margin-left: 9px; flex: none; }
.tray-black { width: 16px; height: 19px; background: linear-gradient(#000 0 14px, #0f0 14px); flex: none; }
.clock { margin-left: 6px; font: 13px "Liberation Sans", sans-serif; }
```
